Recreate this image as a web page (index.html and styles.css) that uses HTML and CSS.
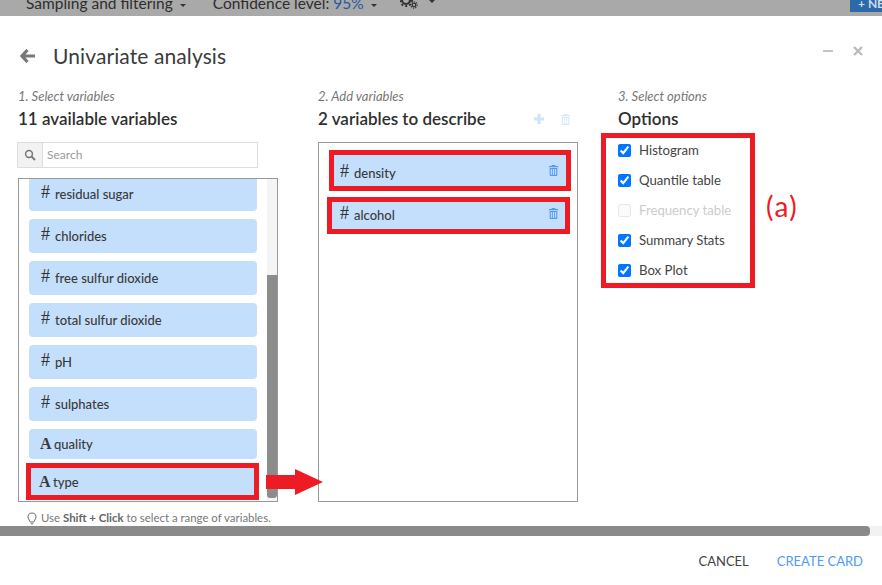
FILE: index.html
```html
<!DOCTYPE html>
<html lang="en">
<head>
<meta charset="utf-8">
<title>Univariate analysis</title>
<link rel="stylesheet" href="styles.css">
</head>
<body>
<svg class="defs" width="0" height="0">
  <symbol id="trash" viewBox="0 0 12 13"><path d="M4 2V1h4v1h3v1.400H1V2zM1.800 4.200h8.400V12a1 1 0 0 1-1 1H2.800a1 1 0 0 1-1-1zm1.200 1.200v6.400h6V5.400z" fill="currentColor" fill-rule="evenodd"/><path d="M4.800 5.400v6.400M7.200 5.400v6.400" stroke="currentColor" stroke-width="1"/></symbol>
</svg>
<header class="topbar">
  <span class="tb-item">Sampling and filtering <i class="caret"></i></span>
  <span class="tb-item tb-conf">Confidence level: <b class="tb-val">95%</b> <i class="caret"></i></span>
  <span class="tb-gear">
    <svg width="18" height="9" viewBox="0 0 18 9"><circle cx="6" cy="0" r="4" fill="none" stroke="#333" stroke-width="2.200"/><circle cx="6" cy="0" r="6" fill="none" stroke="#333" stroke-width="2" stroke-dasharray="2 2"/><circle cx="14" cy="5" r="1.800" fill="none" stroke="#333" stroke-width="1.300"/><circle cx="14" cy="5" r="3.200" fill="none" stroke="#333" stroke-width="1.100" stroke-dasharray="1.200 1.200"/></svg>
    <i class="caret"></i>
  </span>
  <span class="tb-btn">+ NE</span>
</header>
<main class="modal">
  <div class="title-row">
    <svg class="back" width="16" height="14" viewBox="0 0 16 14"><path d="M7.500 1 2 7l5.500 6M2.500 7H15" fill="none" stroke="#777" stroke-width="3.200"/></svg>
    <h1 class="title">Univariate analysis</h1>
    <div class="win-ctl">
      <span class="min"></span>
      <svg width="10" height="10" viewBox="0 0 10 10"><path d="M1 1l8 8M9 1l-8 8" stroke="#bbb" stroke-width="2.400"/></svg>
    </div>
  </div>
  <div class="columns">
    <section class="col">
      <p class="step">1. Select variables</p>
      <h2 class="heading">11 available variables</h2>
      <div class="search">
        <span class="search-ico"><svg width="12" height="12" viewBox="0 0 12 12"><circle cx="5" cy="5" r="3.400" fill="none" stroke="#777" stroke-width="1.500"/><path d="M7.500 7.500 11 11" stroke="#777" stroke-width="1.800"/></svg></span>
        <span class="search-input">Search</span>
      </div>
      <div class="list list-left">
        <div class="items">
          <div class="var first"><span class="hash">#</span>residual sugar</div>
          <div class="var"><span class="hash">#</span>chlorides</div>
          <div class="var"><span class="hash">#</span>free sulfur dioxide</div>
          <div class="var"><span class="hash">#</span>total sulfur dioxide</div>
          <div class="var"><span class="hash">#</span>pH</div>
          <div class="var"><span class="hash">#</span>sulphates</div>
          <div class="var short"><span class="alpha">A</span>quality</div>
          <div class="var-frame type-frame"><div class="var short square"><span class="alpha">A</span>type</div></div>
        </div>
        <div class="scroll-track"><div class="scroll-thumb"></div></div>
      </div>
      <p class="hint">
        <svg width="10" height="13" viewBox="0 0 10 13"><path d="M5 1a4 4 0 0 0-4 4c0 2 1.500 3 2.300 5h3.400C7.500 8 9 7 9 5a4 4 0 0 0-4-4zM3.700 11.800h2.600" fill="none" stroke="#777" stroke-width="1.100"/></svg>
        <span>Use <b>Shift + Click</b> to select a range of variables.</span>
      </p>
    </section>
    <section class="col">
      <p class="step">2. Add variables</p>
      <div class="heading-row">
        <h2 class="heading">2 variables to describe</h2>
        <svg class="act-plus" width="12" height="12" viewBox="0 0 12 12"><path d="M6 1v10M1 6h10" stroke="#cfe3fa" stroke-width="3.200"/></svg>
        <svg class="act-trash" width="11" height="12"><use href="#trash"/></svg>
      </div>
      <div class="list list-right">
        <div class="var-frame density-frame"><div class="var chosen"><span class="hash">#</span>density<svg class="del" width="11" height="12"><use href="#trash"/></svg></div></div>
        <div class="var-frame alcohol-frame"><div class="var chosen"><span class="hash">#</span>alcohol<svg class="del" width="11" height="12"><use href="#trash"/></svg></div></div>
      </div>
    </section>
    <section class="col">
      <p class="step">3. Select options</p>
      <h2 class="heading">Options</h2>
      <div class="options-row">
        <div class="options">
          <label class="opt"><input type="checkbox" checked>Histogram</label>
          <label class="opt"><input type="checkbox" checked>Quantile table</label>
          <label class="opt off"><input type="checkbox" disabled>Frequency table</label>
          <label class="opt"><input type="checkbox" checked>Summary Stats</label>
          <label class="opt"><input type="checkbox" checked>Box Plot</label>
        </div>
        <span class="note">(a)</span>
      </div>
    </section>
  </div>
  <svg class="move-arrow" width="58" height="26" viewBox="0 0 58 26"><path d="M0 6h29V0l28 13-28 13v-6H0z" fill="#ed1c24"/></svg>
  <div class="h-scroll"><div class="h-thumb"></div></div>
  <footer class="actions">
    <span class="btn">CANCEL</span>
    <span class="btn primary">CREATE CARD</span>
  </footer>
</main>
</body>
</html>
```
FILE: styles.css
```css
* { box-sizing: border-box; }
html, body { margin: 0; padding: 0; }
body {
  width: 882px; height: 585px; overflow: hidden; background: #fff;
  font-family: Lato, "Open Sans", sans-serif; color: #333;
}
.defs { position: absolute; }
.topbar {
  height: 16px; background: #a9a9a9; display: flex; align-items: flex-start;
  overflow: hidden; position: relative; font-size: 15.500px; color: #2e2e2e;
  line-height: 16px; padding-left: 26px;
}
.tb-item { white-space: nowrap; margin-top: -5px; }
.tb-conf { margin-left: 27px; }
.tb-val { font-weight: 400; color: #2a5a9a; }
.tb-gear { margin-left: 23px; display: flex; align-items: flex-start; gap: 8px; }
.caret {
  display: inline-block; width: 0; height: 0; vertical-align: middle; margin-left: 3px;
  border-left: 3px solid transparent; border-right: 3px solid transparent; border-top: 3px solid #333;
}
.tb-btn {
  position: absolute; left: 850px; top: 0; width: 40px; height: 12px; background: #2b6aa8;
  color: #cfdcea; font-size: 12px; font-weight: 700; line-height: 8px; padding-left: 8px;
}
.modal { position: relative; height: 569px; }
.title-row {
  height: 62px; padding: 18px 19px 0 20px; display: flex; align-items: center;
}
.title { margin: 0 0 0 17px; font-size: 21px; font-weight: 400; color: #3b3b3b; line-height: 24px; flex: 1; letter-spacing: .1px; }
.win-ctl { display: flex; align-items: center; gap: 20px; margin-bottom: 10px; }
.min { width: 10px; height: 2px; background: #c4c4c4; }
.columns { display: flex; padding-left: 18px; }
.col { width: 300px; flex: none; }
.step { margin: 10px 0 0; font-size: 13px; font-style: italic; line-height: 16px; color: #777; white-space: nowrap; }
.heading { margin: 4px 0 0; font-size: 17px; font-weight: 600; line-height: 22px; color: #2f2f2f; white-space: nowrap; }
.heading-row { display: flex; align-items: flex-start; }
.act-plus { margin: 9px 0 0 47px; }
.act-trash { margin: 9px 0 0 15px; color: #d6e8fb; }
.search {
  margin: 12px 0 0 -1px; width: 241px; height: 26px; border: 1px solid #ddd;
  display: flex; font-size: 12px; color: #999;
}
.search-ico { width: 25px; background: #f2f2f2; border-right: 1px solid #ddd; display: flex; align-items: center; justify-content: center; }
.search-input { padding-left: 4px; line-height: 24px; }
.list { border: 1px solid #999; width: 260px; background: #fff; }
.list-left { margin-top: 10px; height: 324px; display: flex; overflow: hidden; }
.list-right { margin-top: 12px; height: 360px; padding-top: 7px; }
.items { width: 248px; padding-left: 10px; flex: none; }
.var {
  height: 34px; width: 228px; background: #c4dffc; border-radius: 4px;
  display: flex; align-items: center; font-size: 13px; font-weight: 500; color: #3a3a3a;
  padding-left: 12px; margin-bottom: 8px;
}
.first { margin-top: -2px; }
.short { height: 30px; padding-left: 11px; }
.hash { font-size: 18px; font-weight: 400; width: 14px; line-height: 1; position: relative; top: -2px; color: #333; font-family: "Liberation Serif", serif; }
.alpha { font-family: "Liberation Serif", serif; font-size: 16px; font-weight: 700; width: 14px; line-height: 1; }
.var-frame { border: 5px solid #ed1c24; }
.type-frame { width: 233px; height: 37px; margin: -4px 0 0 -3px; }
.square { width: 223px; height: 27px; border-radius: 0; margin: 0; padding-left: 8px; }
.scroll-track { width: 10px; background: #f4f4f4; flex: none; height: 100%; }
.scroll-thumb { margin-top: 96px; height: 223px; background: #8c8c8c; border-radius: 0 0 3px 3px; }
.density-frame { margin-left: 10px; width: 242px; height: 41px; }
.density-frame .chosen { padding-top: 4px; }
.alcohol-frame { margin: 6px 0 0 8px; width: 243px; height: 37px; }
.alcohol-frame .chosen { padding-left: 8px; padding-bottom: 2px; }
.chosen { width: 100%; height: 100%; border-radius: 0; margin: 0; padding-left: 6px; position: relative; }
.del { position: absolute; right: 7px; top: 9px; color: #4f9cf0; }
.alcohol-frame .del { top: 5px; right: 6px; }
.options-row { display: flex; align-items: center; margin-top: 3px; }
.options { margin-left: -17px; width: 154px; height: 155px; border: 5px solid #ed1c24; padding: 2px 0 0 12px; display: flex; flex-direction: column; gap: 10px; flex: none; }
.opt { display: flex; align-items: center; height: 20px; font-size: 13.200px; color: #444; gap: 8px; }
.opt input { margin: 0; width: 13px; height: 13px; accent-color: #0075ff; }
.off { color: #ccc; }
.off input { opacity: .5; }
.note { margin-left: 11px; font-size: 28px; color: #ed1c24; line-height: 1; letter-spacing: 1.500px; transform: translateY(-5px); }
.hint { margin: 8px 0 0 9px; font-size: 11.400px; color: #777; line-height: 16px; white-space: nowrap; display: flex; align-items: center; gap: 4px; }
.hint b { color: #666; }
.move-arrow { position: absolute; left: 266px; top: 453px; }
.h-scroll { position: absolute; left: 0; top: 510px; width: 882px; height: 10px; background: #f2f2f2; }
.h-thumb { width: 870px; height: 10px; background: #8a8a8a; border-radius: 0 4px 4px 0; }
.actions { position: absolute; right: 19px; top: 536px; display: flex; gap: 28px; font-size: 13px; line-height: 18px; color: #444; }
.primary { color: #4a9cf5; }
```
